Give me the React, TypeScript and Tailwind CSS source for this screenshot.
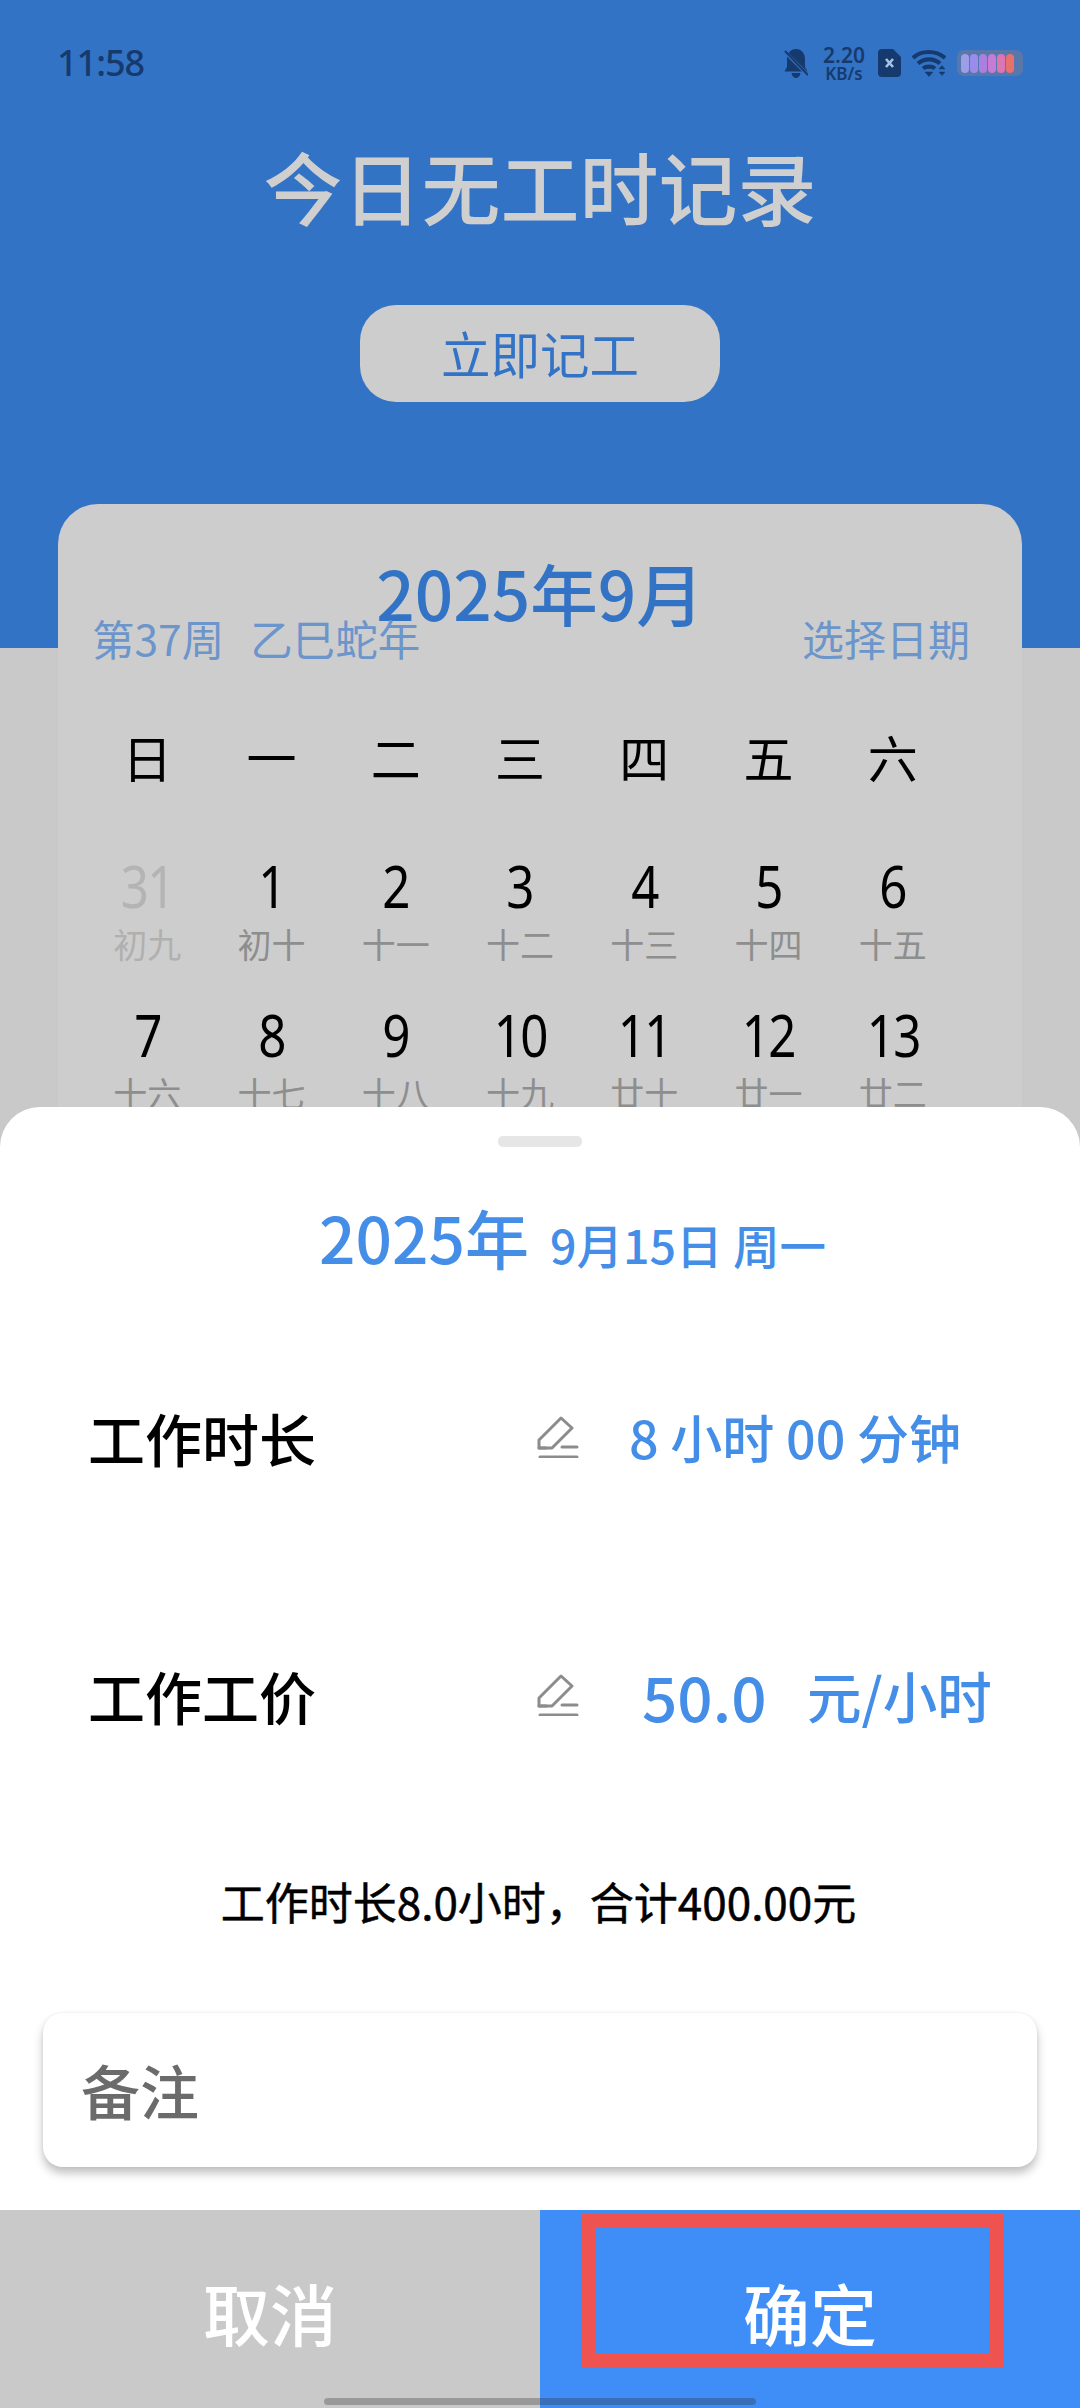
const font = { fontFamily: '"Noto Sans CJK SC", sans-serif' };

const weeks = ['日', '一', '二', '三', '四', '五', '六'];
const row1 = [
  ['31', '初九'], ['1', '初十'], ['2', '十一'], ['3', '十二'], ['4', '十三'], ['5', '十四'], ['6', '十五'],
];
const row2 = [
  ['7', '十六'], ['8', '十七'], ['9', '十八'], ['10', '十九'], ['11', '廿十'], ['12', '廿一'], ['13', '廿二'],
];

function EditIcon() {
  return (
    <svg width="42" height="42" viewBox="0 0 42 42" fill="none" stroke="#8c8c8c" strokeWidth="3" strokeLinecap="round" strokeLinejoin="round" className="shrink-0">
      <path d="M2 32 V24 L24 2 L35 12 L15 32 Z" />
      <path d="M2 32 H9" />
      <path d="M25 31 H40" />
      <path d="M3 41 H40" />
    </svg>
  );
}

function StatusIcons() {
  const cells = ['#9c9ee8', '#9a8ceb', '#ab7fe0', '#c57cd2', '#dc76b2', '#e8716e'];
  return (
    <div className="flex items-center text-[#163a6e]">
      <svg width="24" height="30" viewBox="0 0 24 30" className="mr-[14px]">
        <path d="M12 1 C6.5 1 3 5.5 3 11 V19 L0.5 23.5 H23.5 L21 19 V11 C21 5.5 17.5 1 12 1 Z M7.5 25 H16.5 C16 28.5 14 30 12 30 C10 30 8 28.5 7.5 25 Z" fill="#163a6e" />
        <path d="M0 3 L24 27" stroke="#3373c6" strokeWidth="3.5" />
        <path d="M1 3 L24 27" stroke="#163a6e" strokeWidth="2" />
      </svg>
      <div className="flex flex-col items-center w-[44px] mr-[12px] font-semibold" style={{ fontFamily: '"Noto Sans", sans-serif' }}>
        <span className="text-[21px] leading-[20px]">2.20</span>
        <span className="text-[17px] leading-[17px]">KB/s</span>
      </div>
      <svg width="23" height="28" viewBox="0 0 23 28" className="mr-[11px]">
        <path d="M4 0 H15 L23 8 V24 A4 4 0 0 1 19 28 H4 A4 4 0 0 1 0 24 V4 A4 4 0 0 1 4 0 Z" fill="#163a6e" />
        <path d="M8 10 L15 18 M15 10 L8 18" stroke="#a9c3e6" strokeWidth="2.6" />
      </svg>
      <svg width="34" height="28" viewBox="0 0 34 28" className="mr-[11px]" fill="none" stroke="#163a6e" strokeWidth="4.2">
        <path d="M1 9 C9 1 24 1 33 9" />
        <path d="M6 14.5 C12 9 22 9 28 14.5" />
        <path d="M11 19.5 C14 17 20 17 23 19.5" />
        <path d="M13 23 L17 27.5 L21 23 Z" fill="#163a6e" strokeWidth="0.5" />
        <path d="M27 20 L30 16.5 L33 20 Z M27 23 L30 26.5 L33 23 Z" fill="#163a6e" strokeWidth="0.5" />
      </svg>
      <div className="flex items-center gap-[1px] w-[66px] h-[26px] rounded-[7px] bg-[#5878ab] px-[4px]">
        {cells.map((c) => (
          <span key={c} className="w-[8px] h-[19px] rounded-[4px]" style={{ backgroundColor: c }} />
        ))}
      </div>
    </div>
  );
}

function Cell({ num, lunar, muted }: { num: string; lunar: string; muted?: boolean }) {
  return (
    <div className="flex flex-col items-center">
      <span className={`text-[58px] leading-[60px] tracking-[-2px] scale-x-[0.85] ${muted ? 'text-[#b4b4b4]' : 'text-black'}`} style={{ fontFamily: '"Noto Sans", sans-serif', fontWeight: 400 }}>
        {num}
      </span>
      <span className={`text-[34px] leading-[44px] mt-[6px] ${muted ? 'text-[#b0b0b0]' : 'text-[#8e8e8e]'}`}>{lunar}</span>
    </div>
  );
}

export default function App() {
  return (
    <div className="relative w-[1080px] h-[2408px] overflow-hidden bg-[#c9c9c9]" style={font}>
      <div className="h-[648px] bg-[#3373c6] flex flex-col items-center">
        <div className="w-full h-[44px] mt-[41px] pl-[57px] pr-[57px] flex items-center justify-between">
          <span className="text-[36px] leading-[44px] tracking-[-1px] text-[#163a6e] font-medium" style={{ fontFamily: '"Noto Sans", sans-serif' }}>11:58</span>
          <StatusIcons />
        </div>
        <div className="mt-[46px] text-[79px] leading-[110px] text-[#cfcfcf] font-medium">今日无工时记录</div>
        <div className="mt-[64px] w-[360px] h-[97px] rounded-[36px] bg-[#cdcdcd] flex items-center justify-center text-[49.5px] text-[#3373c6]">
          立即记工
        </div>
      </div>
      <div className="relative -mt-[144px] mx-[58px] h-[700px] rounded-t-[40px] bg-[#cdcdcd]">
        <div className="pt-[48px] text-center text-[67.5px] leading-[80px] text-[#3373c6] font-medium">2025年9月</div>
        <div className="-mt-[23px] pl-[34px] pr-[52px] flex justify-between text-[42.5px] leading-[58px] text-[#6b95cb]">
          <span className="flex gap-[26px]">
            <span>第37周</span>
            <span>乙巳蛇年</span>
          </span>
          <span className="text-[42px]">选择日期</span>
        </div>
        <div className="ml-[27px] w-[870px] mt-[58px] grid grid-cols-7">
          {weeks.map((w) => (
            <div key={w} className="text-center text-[50px] leading-[62px] text-black">{w}</div>
          ))}
        </div>
        <div className="ml-[27px] w-[870px] mt-[69px] grid grid-cols-7">
          {row1.map(([n, l], i) => (
            <Cell key={n} num={n} lunar={l} muted={i === 0} />
          ))}
        </div>
        <div className="ml-[27px] w-[870px] mt-[39px] grid grid-cols-7">
          {row2.map(([n, l]) => (
            <Cell key={n} num={n} lunar={l} />
          ))}
        </div>
      </div>

      <div className="absolute left-0 right-0 bottom-0 h-[1301px] bg-white rounded-t-[40px] flex flex-col">
        <div className="mx-auto mt-[29px] w-[84px] h-[11px] rounded-[5px] bg-[#e6e6e6] shrink-0" />
        <div className="mt-[49px] flex items-baseline justify-center text-[#458ee8] font-medium pl-[65px] h-[90px] shrink-0">
          <span className="text-[64px] leading-[80px]">2025年</span>
          <span className="text-[46.5px] leading-[80px] ml-[21px]">9月15日 周一</span>
        </div>
        <div className="mt-[111px] h-[80px] shrink-0 flex items-center pl-[88px]">
          <span className="w-[449px] text-[57px] leading-[80px] text-black font-medium">工作时长</span>
          <EditIcon />
          <span className="ml-[50px] text-[#458ee8] text-[52px] leading-[80px] font-medium whitespace-nowrap">8 小时 00 分钟</span>
        </div>
        <div className="mt-[178px] h-[80px] shrink-0 flex items-center pl-[88px]">
          <span className="w-[449px] text-[57px] leading-[80px] text-black font-medium">工作工价</span>
          <EditIcon />
          <span className="ml-[63px] w-[165px] text-[#458ee8] text-[62px] leading-[80px] font-medium">50.0</span>
          <span className="text-[#458ee8] text-[54.5px] leading-[80px] whitespace-nowrap font-medium">元/小时</span>
        </div>
        <div className="mt-[141px] h-[50px] shrink-0 text-center text-[44px] leading-[50px] text-black pr-[3px] [-webkit-text-stroke:0.5px_black]">工作时长8.0小时，合计400.00元</div>
        <div className="mt-[87px] mx-[43px] h-[154px] shrink-0 rounded-[20px] bg-white shadow-[0_6px_10px_rgba(0,0,0,0.25),0_0_3px_rgba(0,0,0,0.06)] flex items-center pl-[38px]">
          <span className="text-[59px] leading-[80px] text-[#6b6b6b] font-medium">备注</span>
        </div>
        <div className="mt-[43px] h-[198px] shrink-0 flex text-white text-[67px] font-medium">
          <div className="w-1/2 bg-[#c9c9c9] flex items-center justify-center pt-[6px]">取消</div>
          <div className="w-1/2 bg-[#3f8ef7] flex items-center justify-center pt-[6px]">确定</div>
        </div>
      </div>

      <div className="absolute left-[582px] top-[2214px] w-[421px] h-[154px] border-[14px] border-[#ef5350]" />
      <div className="absolute left-[324px] top-[2398px] w-[216px] h-[7px] rounded-l-[4px] bg-[#999999]" />
      <div className="absolute left-[540px] top-[2398px] w-[216px] h-[7px] rounded-r-[4px] bg-[#3a6fb8]" />
    </div>
  );
}
